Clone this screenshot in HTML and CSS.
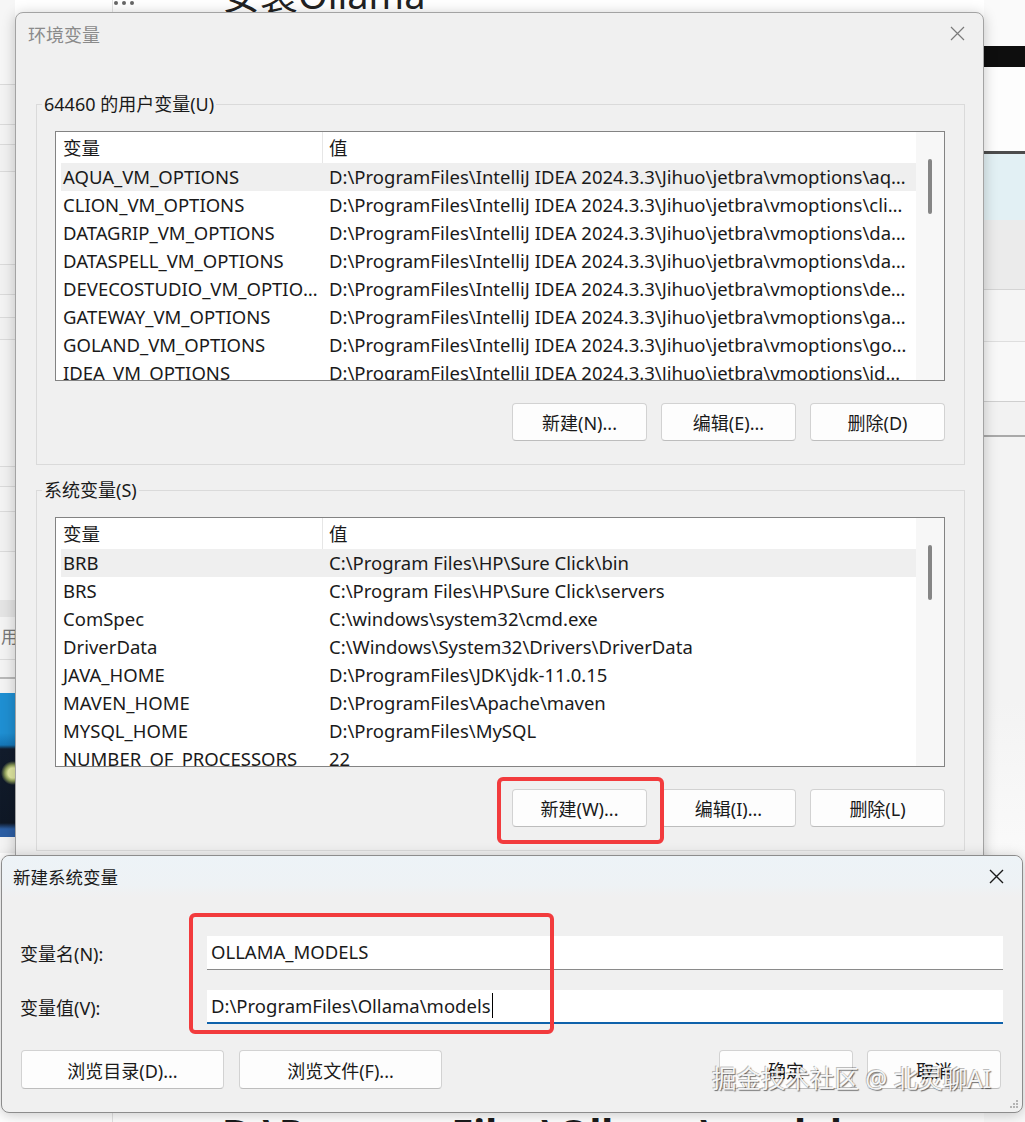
FILE: index.html
```html
<!DOCTYPE html>
<html lang="zh-CN">
  <head>
    <meta charset="UTF-8" />
    <meta name="viewport" content="width=device-width, initial-scale=1.0" />
    <title>环境变量</title>
    <link rel="stylesheet" href="styles.css">
  </head>
  <body>
    <!-- the article page behind the dialogs -->
    <div class="page">
      <aside class="side-left">
        <span class="side-label">用</span>
        <div class="side-img"></div>
      </aside>
      <main class="article">
        <div class="article-top">
          <svg class="more" width="22" height="6" viewBox="0 0 22 6">
            <circle cx="3" cy="3" r="2" />
            <circle cx="11" cy="3" r="2" />
            <circle cx="19" cy="3" r="2" />
          </svg>
          <h1>安装Ollama</h1>
        </div>
        <p class="code-line">D:\ProgramFiles\Ollama\models</p>
      </main>
      <aside class="side-right"></aside>
    </div>

    <section class="window env-window">
      <header class="window-title">
        <span>环境变量</span>
        <button class="close">
          <svg width="15" height="15" viewBox="0 0 15 15">
            <path d="M1 1 L14 14 M14 1 L1 14" />
          </svg>
        </button>
      </header>

      <fieldset class="group">
        <legend>64460 的用户变量(U)</legend>
        <div class="listbox">
          <div class="list-body">
            <div class="list-head"><span>变量</span><span>值</span></div>
            <div class="list-row selected"><span>AQUA_VM_OPTIONS</span><span>D:\ProgramFiles\IntelliJ IDEA 2024.3.3\Jihuo\jetbra\vmoptions\aqua.vmoptions</span></div>
            <div class="list-row"><span>CLION_VM_OPTIONS</span><span>D:\ProgramFiles\IntelliJ IDEA 2024.3.3\Jihuo\jetbra\vmoptions\clion.vmoptions</span></div>
            <div class="list-row"><span>DATAGRIP_VM_OPTIONS</span><span>D:\ProgramFiles\IntelliJ IDEA 2024.3.3\Jihuo\jetbra\vmoptions\datagrip.vmoptions</span></div>
            <div class="list-row"><span>DATASPELL_VM_OPTIONS</span><span>D:\ProgramFiles\IntelliJ IDEA 2024.3.3\Jihuo\jetbra\vmoptions\dataspell.vmoptions</span></div>
            <div class="list-row"><span>DEVECOSTUDIO_VM_OPTIONS</span><span>D:\ProgramFiles\IntelliJ IDEA 2024.3.3\Jihuo\jetbra\vmoptions\devecostudio.vmoptions</span></div>
            <div class="list-row"><span>GATEWAY_VM_OPTIONS</span><span>D:\ProgramFiles\IntelliJ IDEA 2024.3.3\Jihuo\jetbra\vmoptions\gateway.vmoptions</span></div>
            <div class="list-row"><span>GOLAND_VM_OPTIONS</span><span>D:\ProgramFiles\IntelliJ IDEA 2024.3.3\Jihuo\jetbra\vmoptions\goland.vmoptions</span></div>
            <div class="list-row"><span>IDEA_VM_OPTIONS</span><span>D:\ProgramFiles\IntelliJ IDEA 2024.3.3\Jihuo\jetbra\vmoptions\idea.vmoptions</span></div>
          </div>
          <div class="vscroll"><span class="thumb"></span></div>
        </div>
        <div class="btn-row">
          <button class="btn">新建(N)...</button>
          <button class="btn">编辑(E)...</button>
          <button class="btn">删除(D)</button>
        </div>
      </fieldset>

      <fieldset class="group">
        <legend>系统变量(S)</legend>
        <div class="listbox">
          <div class="list-body">
            <div class="list-head"><span>变量</span><span>值</span></div>
            <div class="list-row selected"><span>BRB</span><span>C:\Program Files\HP\Sure Click\bin</span></div>
            <div class="list-row"><span>BRS</span><span>C:\Program Files\HP\Sure Click\servers</span></div>
            <div class="list-row"><span>ComSpec</span><span>C:\windows\system32\cmd.exe</span></div>
            <div class="list-row"><span>DriverData</span><span>C:\Windows\System32\Drivers\DriverData</span></div>
            <div class="list-row"><span>JAVA_HOME</span><span>D:\ProgramFiles\JDK\jdk-11.0.15</span></div>
            <div class="list-row"><span>MAVEN_HOME</span><span>D:\ProgramFiles\Apache\maven</span></div>
            <div class="list-row"><span>MYSQL_HOME</span><span>D:\ProgramFiles\MySQL</span></div>
            <div class="list-row"><span>NUMBER_OF_PROCESSORS</span><span>22</span></div>
          </div>
          <div class="vscroll"><span class="thumb"></span></div>
        </div>
        <div class="btn-row">
          <button class="btn">新建(W)...</button>
          <button class="btn">编辑(I)...</button>
          <button class="btn">删除(L)</button>
        </div>
      </fieldset>
    </section>

    <section class="window new-window">
      <header class="window-title">
        <span>新建系统变量</span>
        <button class="close dark">
          <svg width="15" height="15" viewBox="0 0 15 15">
            <path d="M1 1 L14 14 M14 1 L1 14" />
          </svg>
        </button>
      </header>
      <div class="form">
        <label>变量名(N):</label>
        <div class="field">OLLAMA_MODELS</div>
        <label>变量值(V):</label>
        <div class="field focused">D:\ProgramFiles\Ollama\models<span class="caret"></span></div>
      </div>
      <div class="dlg-buttons">
        <div class="btn-group">
          <button class="btn wide">浏览目录(D)...</button>
          <button class="btn wide">浏览文件(F)...</button>
        </div>
        <div class="btn-group">
          <button class="btn">确定</button>
          <button class="btn">取消</button>
        </div>
      </div>
      <svg class="grip" width="10" height="10" viewBox="0 0 10 10">
        <rect x="7" y="1" width="2" height="2" />
        <rect x="4" y="4" width="2" height="2" />
        <rect x="7" y="4" width="2" height="2" />
        <rect x="1" y="7" width="2" height="2" />
        <rect x="4" y="7" width="2" height="2" />
        <rect x="7" y="7" width="2" height="2" />
      </svg>
    </section>

    <div class="mark mark-new"></div>
    <div class="mark mark-fields"></div>
    <div class="watermark">掘金技术社区 @ 北灵聊AI</div>
  </body>
</html>
```

FILE: styles.css
```css
* {
  box-sizing: border-box;
}

body {
  margin: 0;
  width: 1025px;
  height: 1122px;
  overflow: hidden;
  position: relative;
  background: #fff;
  font-family: "Noto Sans", "Noto Sans CJK SC", sans-serif;
  color: #1a1a1a;
}

/* page behind */

.page {
  display: grid;
  grid-template-columns: 15px 1fr 41px;
  height: 1122px;
}

.side-left {
  display: flex;
  flex-direction: column;
  align-items: flex-end;
  overflow: hidden;
  background: linear-gradient(
    #f6f6f6 0 84px, #dadada 84px 85px,
    #f3f3f3 85px 124px, #dadada 124px 125px,
    #f3f3f3 125px 144px, #dadada 144px 145px,
    #f1f1f1 145px 171px, #dadada 171px 172px,
    #f3f3f3 172px 264px, #dadada 264px 265px,
    #f1f1f1 265px 294px, #dadada 294px 295px,
    #f3f3f3 295px 317px, #dadada 317px 318px,
    #f1f1f1 318px 339px, #dadada 339px 340px,
    #f3f3f3 340px 466px, #dadada 466px 467px,
    #f1f1f1 467px 486px, #dadada 486px 487px,
    #f3f3f3 487px 511px, #dadada 511px 512px,
    #f1f1f1 512px 551px, #dadada 551px 552px,
    #f3f3f3 552px 600px, #e4e4e4 600px 617px,
    #f3f3f3 617px 659px, #dadada 659px 660px,
    #f3f3f3 660px 677px, #b8b8b8 677px 679px,
    #f3f3f3 679px 853px, #fff 853px
  );
}

.side-label {
  margin: 625px -3px 0 0;
  font-size: 17px;
  line-height: 24px;
  color: #777;
}

.side-img {
  width: 15px;
  height: 144px;
  margin-top: 44px;
  background:
    radial-gradient(circle at 13px 80px, #dfe6a0 0 5px, #8f9f5a 8px, transparent 12px),
    linear-gradient(#1f8fd2 0 40px, #1576b6 52px, #121c2c 56px, #0f1826 130px, #2c5ea3 136px);
}

.article {
  display: flex;
  flex-direction: column;
  justify-content: space-between;
  overflow: hidden;
  background: linear-gradient(90deg, transparent 97px, #e4e4e4 97px 98px, transparent 98px);
}

.article-top {
  display: flex;
  align-items: flex-start;
}

.more {
  margin-left: 98px;
  fill: #666;
}

.article h1 {
  margin: -25px 0 0 87px;
  font-size: 38px;
  line-height: 1;
  font-weight: 400;
  color: #222;
}

.code-line {
  margin: 0 0 -31px 207px;
  font-size: 40px;
  line-height: 1;
  font-weight: 700;
  color: #1b1b1b;
}

.side-right {
  background: linear-gradient(
    #fafafa 0 46px, #0e0e0e 46px 67px,
    #fdfdfd 67px 151px, #4c4c4c 151px 154px,
    #e2f0f4 154px 220px, #ebebeb 220px 289px, #d4d4d4 289px 290px,
    #f5f5f5 290px 341px, #dedede 341px 342px,
    #f8f8f8 342px 401px, #cfcfcf 401px 402px,
    #f2f2f2 402px 435px, #a9a9a9 435px 437px,
    #f3f3f3 437px 700px, #fafafa 860px
  );
}

/* windows */

.window {
  position: absolute;
  background: #f0f0f0;
  border: 1px solid #a3a3a3;
  border-radius: 8px;
  box-shadow: 0 2px 14px rgba(0, 0, 0, 0.22);
}

.env-window {
  left: 15px;
  top: 12px;
  width: 969px;
  height: 860px;
}

.new-window {
  left: 1px;
  top: 855px;
  width: 1022px;
  height: 258px;
  border-color: #8c8c8c;
}

.window-title {
  display: flex;
  align-items: center;
  justify-content: space-between;
  height: 41px;
  padding: 0 18px 0 12px;
  font-size: 18px;
  color: #8a8a8a;
}

.new-window .window-title {
  padding-left: 11px;
  font-size: 17.5px;
  color: #1a1a1a;
  border-radius: 8px 8px 0 0;
  background: linear-gradient(#edf3f7, #eef2f5 70%, #f0f0f0);
}

.close {
  display: flex;
  padding: 0;
  border: none;
  background: none;
}

.close path {
  stroke: #7a7a7a;
  stroke-width: 1.2;
  fill: none;
}

.close.dark path {
  stroke: #1a1a1a;
  stroke-width: 1.4;
}

/* group boxes */

.group {
  margin: 38px 18px 0 20px;
  padding: 15px 19px 23px 18px;
  border: 1px solid #dadada;
  min-width: 0;
}

.group + .group {
  margin-top: 13px;
}

.group legend {
  margin-left: -13px;
  padding: 0 2px;
  font-size: 18px;
  line-height: 24px;
}

.listbox {
  display: flex;
  height: 250px;
  border: 1px solid #838383;
  background: #fff;
}

.list-body {
  flex: 1;
  min-width: 0;
  padding-left: 5px;
  overflow: hidden;
  font-size: 18.5px;
}

.list-head,
.list-row {
  display: grid;
  grid-template-columns: 261px 1fr;
}

.list-head {
  height: 31px;
  line-height: 31px;
}

.list-row {
  height: 28px;
  line-height: 28px;
}

.list-row.selected {
  background: #efefef;
}

.list-head span,
.list-row span {
  padding-left: 2px;
  white-space: nowrap;
  overflow: hidden;
  text-overflow: ellipsis;
}

.list-head span + span,
.list-row span + span {
  padding: 0 8px 0 7px;
}

.list-head span + span {
  padding-left: 6px;
  border-left: 1px solid #e6e6e6;
}

.vscroll {
  display: flex;
  justify-content: center;
  width: 28px;
  padding-top: 27px;
  background: #f7f7f7;
}

.thumb {
  width: 4px;
  height: 55px;
  border-radius: 2px;
  background: #868686;
}

/* buttons */

.btn-row {
  display: flex;
  justify-content: flex-end;
  gap: 14px;
  margin-top: 22px;
}

.btn {
  width: 135px;
  height: 38px;
  padding: 0;
  border: 1px solid #d2d2d2;
  border-bottom-color: #bdbdbd;
  border-radius: 4px;
  background: #fdfdfd;
  font-family: inherit;
  font-size: 18px;
  color: #1a1a1a;
}

/* new variable dialog */

.form {
  display: grid;
  grid-template-columns: 187px 1fr;
  row-gap: 20px;
  align-items: center;
  padding: 39px 19px 0 18px;
  font-size: 18px;
}

.field {
  display: flex;
  align-items: center;
  height: 34px;
  padding: 0 4px 2px;
  background: #fff;
  border-bottom: 1px solid #8a8a8a;
  font-size: 18.5px;
}

.field.focused {
  border-bottom: 2px solid #0f62ab;
}

.caret {
  width: 1px;
  height: 25px;
  margin-left: 1px;
  background: #000;
}

.dlg-buttons {
  display: flex;
  justify-content: space-between;
  margin-top: 26px;
  padding: 0 21px 0 19px;
}

.btn-group {
  display: flex;
  gap: 14px;
}

.dlg-buttons .btn {
  width: 134px;
  height: 39px;
}

.dlg-buttons .btn.wide {
  width: 203px;
}

.dlg-buttons .btn-group:first-child {
  gap: 15px;
}

.grip {
  position: absolute;
  right: 3px;
  bottom: 3px;
  fill: #b4b4b4;
}

/* red annotation boxes and the site watermark */

.mark {
  position: absolute;
  border: 4px solid #f23b3d;
  border-radius: 6px;
}

.mark-new {
  left: 497px;
  top: 777px;
  width: 167px;
  height: 67px;
}

.mark-fields {
  left: 189px;
  top: 913px;
  width: 365px;
  height: 121px;
}

.watermark {
  position: absolute;
  left: 712px;
  top: 1064px;
  font-size: 24.5px;
  line-height: 30px;
  color: rgba(255, 255, 255, 0.92);
  white-space: nowrap;
  text-shadow:
    1px 1px 1px rgba(0, 0, 0, 0.55),
    -1px -1px 0 rgba(0, 0, 0, 0.25);
}
```
